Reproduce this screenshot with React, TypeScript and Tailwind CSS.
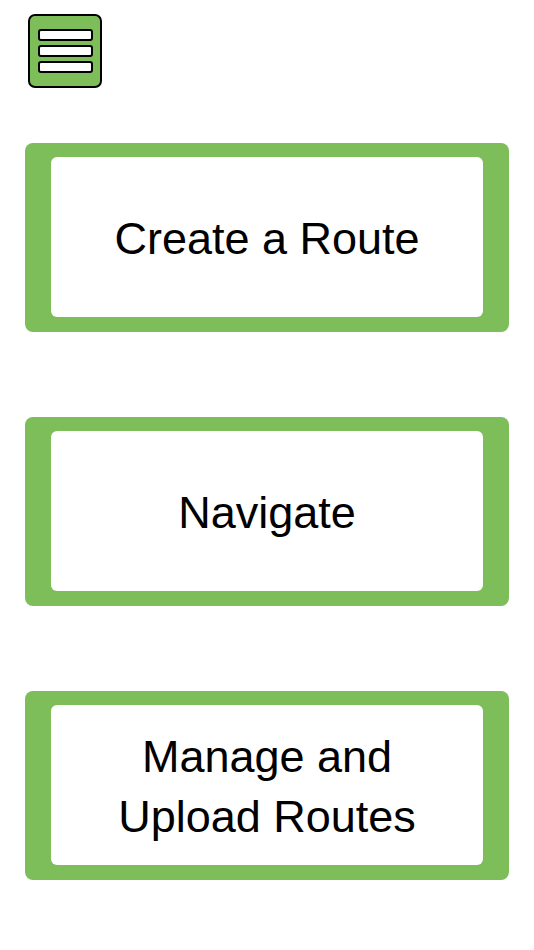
const items = [["Create a Route"], ["Navigate"], ["Manage and", "Upload Routes"]];

function MenuButton() {
  return (
    <button className="flex h-[74px] w-[74px] flex-col items-center justify-center gap-[4px] rounded-[7px] border-2 border-black bg-[#7dbd5a]">
      <span className="h-[12px] w-[55px] rounded-[3px] border-2 border-black bg-white" />
      <span className="h-[12px] w-[55px] rounded-[3px] border-2 border-black bg-white" />
      <span className="h-[12px] w-[55px] rounded-[3px] border-2 border-black bg-white" />
    </button>
  );
}

export default function App() {
  return (
    <div
      className="flex min-h-[950px] w-full flex-col bg-white text-black"
      style={{ fontFamily: "'Liberation Sans', Inter, sans-serif" }}
    >
      <div className="pl-[28px] pt-[14px]">
        <MenuButton />
      </div>
      <div className="mt-[55px] flex flex-col gap-[85px] px-[25px]">
        {items.map((lines) => (
          <button
            key={lines[0]}
            className="flex h-[189px] w-full rounded-[8px] bg-[#7dbd5a] pb-[15px] pl-[26px] pr-[26px] pt-[14px]"
          >
            <div className="flex flex-1 flex-col items-center justify-center rounded-[6px] bg-white pt-[4px] text-[45px] leading-[60px]">
              {lines.map((l) => (
                <span key={l}>{l}</span>
              ))}
            </div>
          </button>
        ))}
      </div>
    </div>
  );
}
